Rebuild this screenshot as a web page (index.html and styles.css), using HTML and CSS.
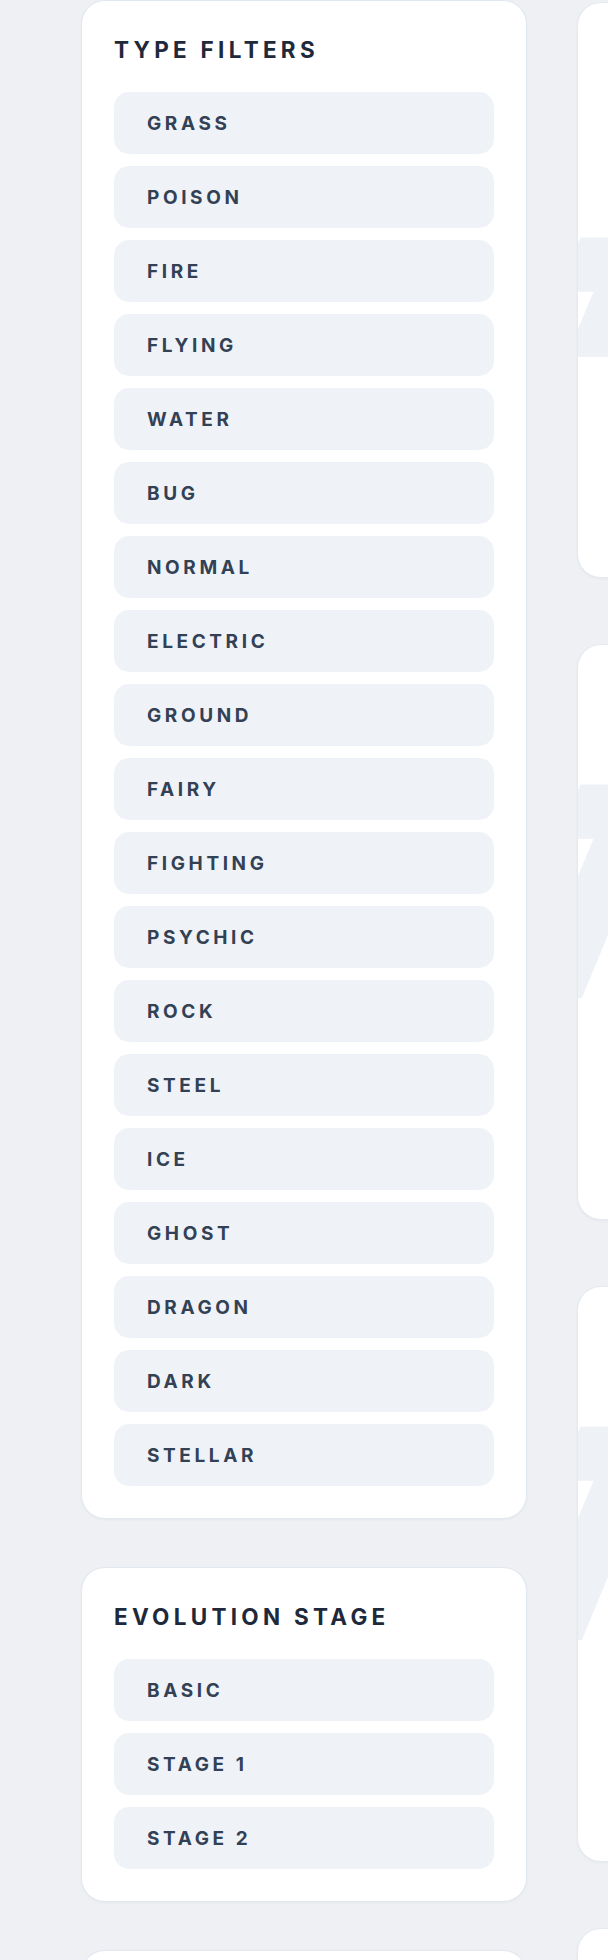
FILE: index.html
```html
<!DOCTYPE html>
<html lang="en">
<head>
    <meta charset="UTF-8">
    <meta name="viewport" content="width=device-width, initial-scale=1.0">
    <title>Pokedex Filters</title>
    <link rel="stylesheet" href="styles.css">
</head>
<body>
    <div class="page">
        <aside class="sidebar">
            <section class="panel">
                <h2 class="panel-title">Type Filters</h2>
                <div class="filter-list">
                    <button class="filter-btn">Grass</button>
                    <button class="filter-btn">Poison</button>
                    <button class="filter-btn">Fire</button>
                    <button class="filter-btn">Flying</button>
                    <button class="filter-btn">Water</button>
                    <button class="filter-btn">Bug</button>
                    <button class="filter-btn">Normal</button>
                    <button class="filter-btn">Electric</button>
                    <button class="filter-btn">Ground</button>
                    <button class="filter-btn">Fairy</button>
                    <button class="filter-btn">Fighting</button>
                    <button class="filter-btn">Psychic</button>
                    <button class="filter-btn">Rock</button>
                    <button class="filter-btn">Steel</button>
                    <button class="filter-btn">Ice</button>
                    <button class="filter-btn">Ghost</button>
                    <button class="filter-btn">Dragon</button>
                    <button class="filter-btn">Dark</button>
                    <button class="filter-btn">Stellar</button>
                </div>
            </section>

            <section class="panel">
                <h2 class="panel-title">Evolution Stage</h2>
                <div class="filter-list">
                    <button class="filter-btn">Basic</button>
                    <button class="filter-btn">Stage 1</button>
                    <button class="filter-btn">Stage 2</button>
                </div>
            </section>

            <section class="panel panel-next"></section>
        </aside>

        <main class="dex-grid">
            <article class="dex-card dex-card-first">
                <div class="dex-art"><span class="dex-mark">#</span></div>
                <div class="dex-body"></div>
            </article>
            <article class="dex-card">
                <div class="dex-art"><span class="dex-mark">#</span></div>
                <div class="dex-body"></div>
            </article>
            <article class="dex-card">
                <div class="dex-art"><span class="dex-mark">#</span></div>
                <div class="dex-body"></div>
            </article>
            <article class="dex-card">
                <div class="dex-art"><span class="dex-mark">#</span></div>
                <div class="dex-body"></div>
            </article>
        </main>
    </div>
</body>
</html>
```

FILE: styles.css
```css
body {
    margin: 0;
    padding: 0;
    background-color: #eef0f4;
    font-family: Inter, "Noto Sans", sans-serif;
    color: #1e293b;
    overflow: hidden;
}

.page {
    display: grid;
    grid-template-columns: 446px 640px;
    column-gap: 50px;
    padding-left: 81px;
    align-items: start;
}

.sidebar {
    display: flex;
    flex-direction: column;
    gap: 48px;
}

.panel {
    background-color: #fff;
    border: 1px solid #e2e8f0;
    border-radius: 24px;
    padding: 35px 32px 32px;
    box-shadow: 0 1px 3px rgba(15, 23, 42, 0.04);
}

.panel-next {
    height: 200px;
}

.panel-title {
    margin: 0 0 29px;
    font-size: 22.5px;
    line-height: 27px;
    font-weight: 700;
    letter-spacing: 0.19em;
    text-transform: uppercase;
    color: #1e293b;
}

.filter-list {
    display: flex;
    flex-direction: column;
    gap: 12px;
}

.filter-btn {
    display: block;
    width: 100%;
    height: 62px;
    padding: 0 33px;
    border: none;
    border-radius: 15px;
    background-color: #eff3f8;
    font-family: inherit;
    font-size: 19px;
    font-weight: 700;
    letter-spacing: 0.19em;
    text-transform: uppercase;
    text-align: left;
    color: #334155;
    cursor: pointer;
}

.dex-grid {
    display: flex;
    flex-direction: column;
    gap: 66px;
    padding-top: 2px;
}

.dex-card {
    height: 574px;
    background-color: #fff;
    border: 1px solid #e5e9f0;
    border-radius: 24px;
    overflow: hidden;
    box-shadow: 0 1px 3px rgba(15, 23, 42, 0.04);
}

.dex-art {
    position: relative;
    height: 354px;
    overflow: hidden;
}

/* big faint dex number behind the card art */
.dex-mark {
    position: absolute;
    top: 25px;
    left: 4px;
    font-family: Inter, sans-serif;
    font-size: 380px;
    font-weight: 900;
    line-height: 1;
    color: #eef1f6;
    transform: skewX(-14deg);
    transform-origin: 0 0;
}

.dex-card-first .dex-mark {
    top: 120px;
}
```
